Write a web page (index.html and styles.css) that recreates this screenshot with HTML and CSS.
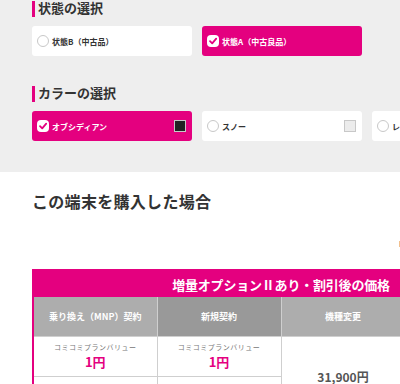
FILE: index.html
```html
<!DOCTYPE html>
<html lang="ja">
<head>
    <meta charset="UTF-8">
    <meta name="viewport" content="width=device-width, initial-scale=1.0">
    <title>端末の購入</title>
    <link rel="stylesheet" href="styles.css">
</head>
<body>
    <div class="select-area">
        <h2 class="select-title first">状態の選択</h2>
        <div class="option-row">
            <label class="option">
                <span class="radio"></span>
                <span class="option-name">状態B（中古品）</span>
            </label>
            <label class="option is-checked">
                <span class="radio">
                    <svg viewBox="0 0 12 12" width="12" height="12"><path d="M3 6.2 L5.2 8.4 L9.2 3.6" fill="none" stroke="#e4007f" stroke-width="1.8" stroke-linecap="round" stroke-linejoin="round"/></svg>
                </span>
                <span class="option-name">状態A（中古良品）</span>
            </label>
        </div>

        <h2 class="select-title">カラーの選択</h2>
        <div class="option-row">
            <label class="option is-checked">
                <span class="radio">
                    <svg viewBox="0 0 12 12" width="12" height="12"><path d="M3 6.2 L5.2 8.4 L9.2 3.6" fill="none" stroke="#e4007f" stroke-width="1.8" stroke-linecap="round" stroke-linejoin="round"/></svg>
                </span>
                <span class="option-name">オブシディアン</span>
                <span class="swatch swatch-dark"></span>
            </label>
            <label class="option">
                <span class="radio"></span>
                <span class="option-name">スノー</span>
                <span class="swatch swatch-light"></span>
            </label>
            <label class="option">
                <span class="radio"></span>
                <span class="option-name">レッド</span>
                <span class="swatch swatch-red"></span>
            </label>
        </div>
    </div>

    <div class="price-area">
        <h2 class="price-title">この端末を購入した場合</h2>
        <div class="scroll-hint"><span class="hint-mark"></span></div>

        <table class="price-table">
            <tr>
                <th colspan="4" class="table-head">増量オプションⅡあり・割引後の価格</th>
            </tr>
            <tr class="col-head">
                <th>乗り換え（MNP）契約</th>
                <th class="dark">新規契約</th>
                <th>機種変更</th>
                <th class="dark">機種変更</th>
            </tr>
            <tr>
                <td>
                    <div class="plan">コミコミプランバリュー</div>
                    <div class="price">1円</div>
                </td>
                <td>
                    <div class="plan">コミコミプランバリュー</div>
                    <div class="price">1円</div>
                </td>
                <td rowspan="2" class="plain-price">31,900円</td>
                <td rowspan="2" class="plain-price">31,900円</td>
            </tr>
            <tr>
                <td>
                    <div class="plan">トクトクプラン2</div>
                    <div class="price">1円</div>
                </td>
                <td>
                    <div class="plan">トクトクプラン2</div>
                    <div class="price">1円</div>
                </td>
            </tr>
        </table>
    </div>
</body>
</html>
```

FILE: styles.css
```css
body {
    margin: 0;
    font-family: "Noto Sans CJK JP", "Noto Sans", sans-serif;
    color: #333;
    background-color: #fff;
    overflow: hidden;
}

.select-area {
    background-color: #eeeeee;
    padding: 1px 0 30px 32px;
    height: 141px;
    overflow: hidden;
}

.select-title {
    margin: 30px 0 0 0;
    border-left: 3px solid #e4007f;
    padding: 0 0 3px 3px;
    height: 13px;
    font-size: 13px;
    line-height: 13px;
    font-weight: bold;
    color: #333;
}

.select-title.first {
    margin-top: 0;
}

.option-row {
    display: flex;
    gap: 10px;
    margin-top: 9px;
}

.option {
    flex: 0 0 160px;
    height: 30px;
    box-sizing: border-box;
    display: flex;
    align-items: center;
    padding: 0 6px 0 5px;
    background-color: #fff;
    border-radius: 3px;
    cursor: pointer;
}

.option.is-checked {
    background-color: #e4007f;
    color: #fff;
}

.radio {
    width: 12px;
    height: 12px;
    box-sizing: border-box;
    border: 1px solid #c8c8c8;
    border-radius: 50%;
    background-color: #fff;
    display: flex;
    align-items: center;
    justify-content: center;
    flex-shrink: 0;
}

.is-checked .radio {
    border: none;
    border-radius: 4px;
}

.option-name {
    margin-left: 3px;
    font-size: 8px;
    font-weight: bold;
    flex: 1;
}

.swatch {
    width: 12px;
    height: 12px;
    box-sizing: border-box;
    border: 1px solid #c8c8c8;
}

.swatch-dark {
    background-color: #222;
}

.swatch-light {
    background-color: #ececec;
}

.swatch-red {
    background-color: #c0102a;
}

.price-area {
    padding: 17px 0 0 32px;
}

.price-title {
    margin: 0;
    font-size: 16px;
    line-height: 24px;
    font-weight: bold;
    color: #333;
    letter-spacing: 0.3px;
}

.scroll-hint {
    height: 56px;
    display: flex;
    justify-content: flex-end;
    align-items: flex-start;
}

.hint-mark {
    width: 1px;
    height: 6px;
    margin-top: 28px;
    background-color: #f2c08e;
}

.price-table {
    width: 498px;
    table-layout: fixed;
    border-collapse: collapse;
    border: 2px solid #e4007f;
    text-align: center;
}

.table-head {
    background-color: #e4007f;
    color: #fff;
    height: 26px;
    font-size: 13px;
    font-weight: bold;
    padding: 0;
    letter-spacing: -0.2px;
}

.col-head th {
    background-color: #adadad;
    color: #fff;
    height: 39px;
    font-size: 9px;
    font-weight: bold;
    padding: 0;
    border: 1px solid #cfcfcf;
    border-top: none;
}

.col-head th.dark {
    background-color: #999;
}

td {
    border: 1px solid #cfcfcf;
    height: 39px;
    padding: 0;
    vertical-align: middle;
}

.plan {
    font-size: 7px;
    color: #777;
    line-height: 10px;
    letter-spacing: 0.5px;
}

.price {
    font-size: 13px;
    font-weight: bold;
    color: #e4007f;
    line-height: 20px;
}

.plain-price {
    font-size: 12px;
    font-weight: bold;
    color: #555;
}
```
